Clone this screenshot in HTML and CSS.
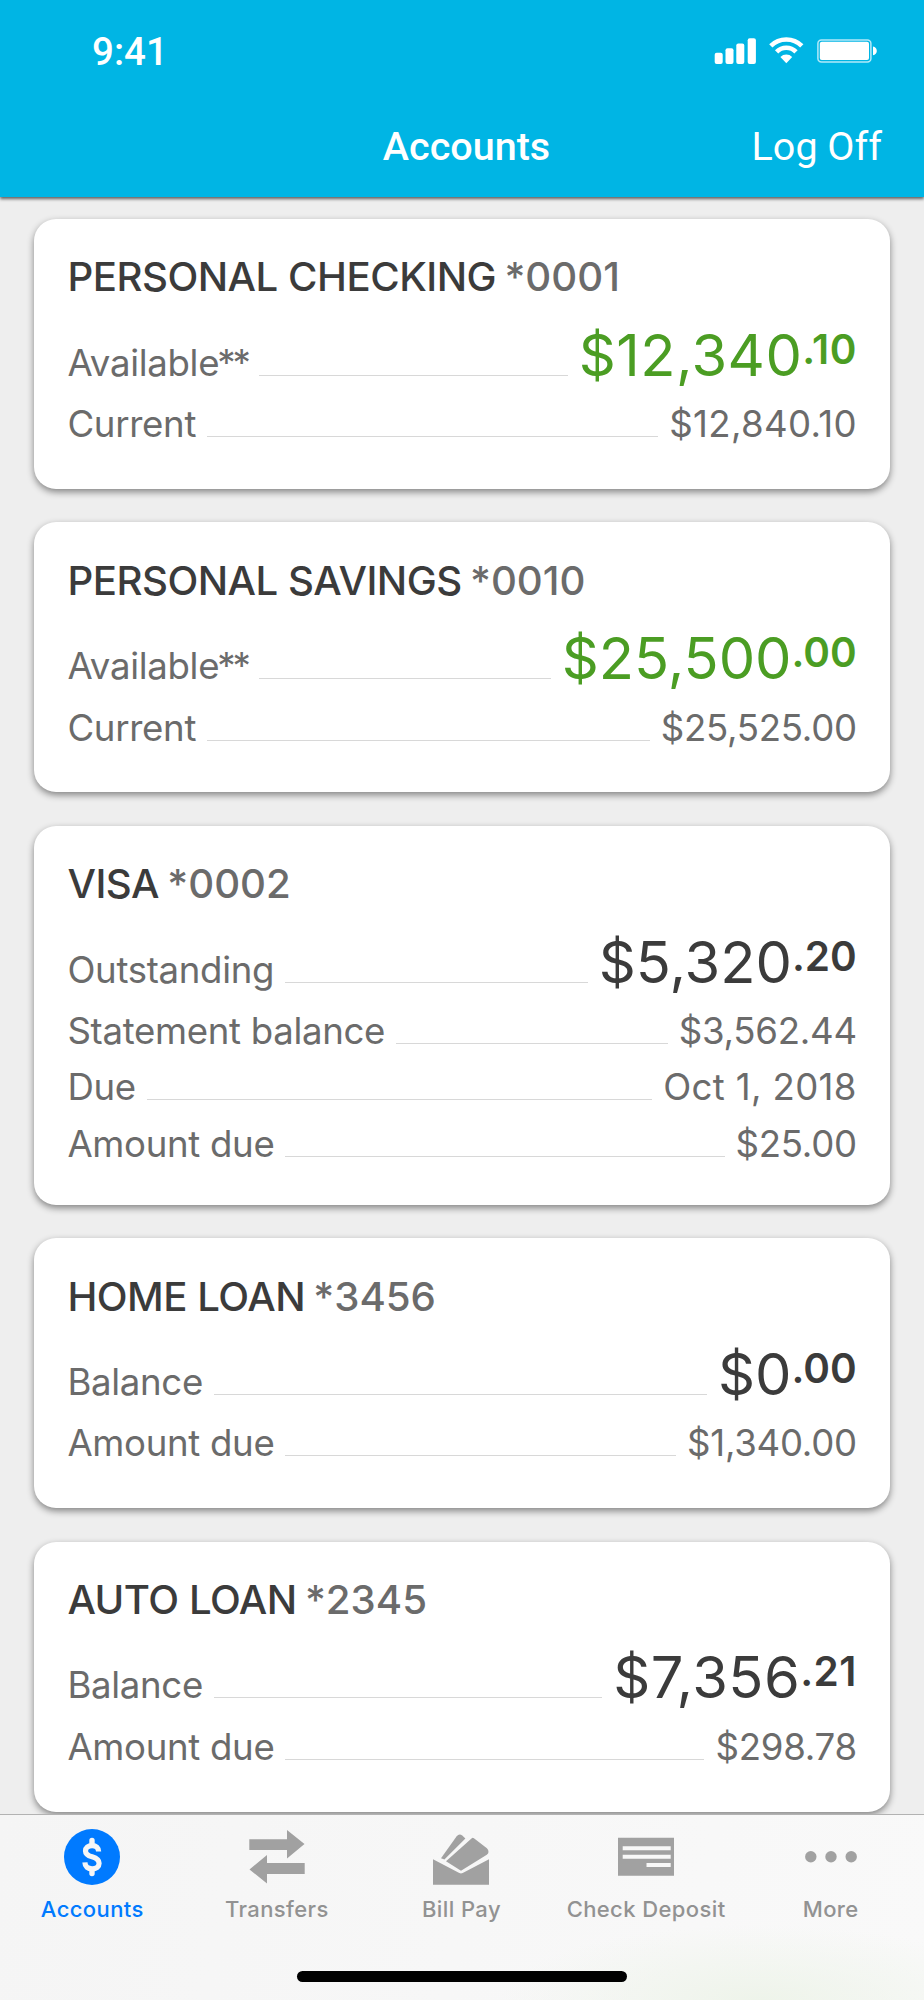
FILE: index.html
```html
<!DOCTYPE html>
<html lang="en">
<head>
    <meta charset="UTF-8">
    <title>Accounts</title>
    <link rel="stylesheet" href="styles.css">
</head>
<body>
<div class="screen">
    <header class="header">
        <div class="status">
            <span class="time">9:41</span>
            <svg class="status-icons" width="164" height="28" viewBox="0 0 164 28" fill="#fff">
                <rect x="0.7" y="15.7" width="8" height="11.3" rx="2"/>
                <rect x="11.5" y="11.3" width="8" height="15.7" rx="2"/>
                <rect x="22.3" y="6.5" width="8" height="20.5" rx="2"/>
                <rect x="33.7" y="1.3" width="8.2" height="25.7" rx="2"/>
                <g fill="none" stroke="#fff" stroke-width="4.6">
                    <path d="M56.8 8.9a22 22 0 0 1 31 0"/>
                    <path d="M62.6 14.8a13.6 13.6 0 0 1 19.4 0"/>
                </g>
                <path d="M72.3 26.2l-5.9-6.3a8.6 8.6 0 0 1 11.8 0z"/>
                <rect x="103.9" y="2.9" width="53" height="22" rx="3.5" fill="none" stroke="#b3e9f9" stroke-width="1.5"/>
                <rect x="105.8" y="4.8" width="49.2" height="18.2" rx="2"/>
                <path d="M159 9.6c2.3.4 3.8 2.1 3.8 4.3s-1.5 3.9-3.8 4.3z"/>
            </svg>
        </div>
        <div class="nav">
            <span class="nav-title">Accounts</span>
            <a class="logoff" href="#">Log Off</a>
        </div>
    </header>

    <main class="list">
        <section class="card">
            <h2 class="name"><span class="type">PERSONAL CHECKING</span> <span class="num">*0001</span></h2>
            <div class="row main">
                <span class="label">Available<span class="stars">**</span></span><i class="line"></i>
                <span class="amount green wide">$12,340<sup>.10</sup></span>
            </div>
            <div class="row"><span class="label">Current</span><i class="line"></i><span class="value wide">$12,840.10</span></div>
        </section>
        <section class="card">
            <h2 class="name"><span class="type">PERSONAL SAVINGS</span> <span class="num">*0010</span></h2>
            <div class="row main">
                <span class="label">Available<span class="stars">**</span></span><i class="line"></i>
                <span class="amount green">$25,500<sup>.00</sup></span>
            </div>
            <div class="row"><span class="label">Current</span><i class="line"></i><span class="value">$25,525.00</span></div>
        </section>
        <section class="card tall">
            <h2 class="name"><span class="type">VISA</span> <span class="num">*0002</span></h2>
            <div class="row main">
                <span class="label">Outstanding</span><i class="line"></i>
                <span class="amount">$5,320<sup>.20</sup></span>
            </div>
            <div class="row"><span class="label">Statement balance</span><i class="line"></i><span class="value">$3,562.44</span></div>
            <div class="row"><span class="label">Due</span><i class="line"></i><span class="value wide">Oct 1, 2018</span></div>
            <div class="row"><span class="label">Amount due</span><i class="line"></i><span class="value">$25.00</span></div>
        </section>
        <section class="card">
            <h2 class="name"><span class="type">HOME LOAN</span> <span class="num">*3456</span></h2>
            <div class="row main">
                <span class="label">Balance</span><i class="line"></i>
                <span class="amount">$0<sup>.00</sup></span>
            </div>
            <div class="row"><span class="label">Amount due</span><i class="line"></i><span class="value">$1,340.00</span></div>
        </section>
        <section class="card">
            <h2 class="name"><span class="type">AUTO LOAN</span> <span class="num">*2345</span></h2>
            <div class="row main">
                <span class="label">Balance</span><i class="line"></i>
                <span class="amount wide">$7,356<sup>.21</sup></span>
            </div>
            <div class="row"><span class="label">Amount due</span><i class="line"></i><span class="value">$298.78</span></div>
        </section>
    </main>

    <footer class="tabbar">
        <nav class="tabs">
            <a class="tab active" href="#">
                <svg class="icon" viewBox="0 0 56 56">
                    <circle cx="28" cy="28" r="28" fill="currentColor"/>
                    <path d="M28 11.5V15M28 41v3.5" fill="none" stroke="#f6f6f6" stroke-width="5.4" stroke-linecap="round"/>
                    <path d="M34.6 22.6c0-3.8-2.5-6-6.5-6s-6.6 2.1-6.6 5.3c0 3.3 2.4 4.6 6.6 5.9 4.4 1.4 7 2.9 7 6.5 0 3.5-2.8 5.5-7 5.5-4.3 0-7.1-2.2-7.2-6.4" fill="none" stroke="#f6f6f6" stroke-width="5.2"/>
                </svg>
                <span>Accounts</span>
            </a>
            <a class="tab" href="#">
                <svg class="icon" viewBox="0 0 56 56" fill="#a1a1a1">
                    <path d="M0.3 10.3H38V1l17.5 14L38 29.5V21H0.3z"/>
                    <path d="M55.7 45H18v9.5L0.5 40.5 18 26v8h37.7z"/>
                </svg>
                <span>Transfers</span>
            </a>
            <a class="tab" href="#">
                <svg class="icon" viewBox="0 0 56 56" fill="#a1a1a1">
                    <path d="M0 30.3l26.3 13.8q1.7.9 3.4 0L56 30.3v25.5H0z"/>
                    <path d="M13 32.2L38.8 9.2q1-.9 2.1 0l13 10q1.7 1.5 1.6 3.8 0 1.7-1.7 2.8L28 41.7z"/>
                    <path d="M8 29.3L23.5 7.6q2.6-3.3 5.7-1.1l3.2 3.1L11.4 30.5z"/>
                </svg>
                <span>Bill Pay</span>
            </a>
            <a class="tab" href="#">
                <svg class="icon" viewBox="0 0 56 56">
                    <path d="M0 8.7h56v38H0z" fill="#a1a1a1"/>
                    <path d="M4.7 17.3h48v4h-48zM4.7 25.7h48v4h-48zM28.5 34h24.2v4H28.5z" fill="#f8f8f8"/>
                </svg>
                <span>Check Deposit</span>
            </a>
            <a class="tab" href="#">
                <svg class="icon" viewBox="0 0 56 56" fill="#a1a1a1">
                    <circle cx="7.8" cy="27.7" r="5.7"/>
                    <circle cx="28" cy="27.7" r="5.7"/>
                    <circle cx="48.2" cy="27.7" r="5.7"/>
                </svg>
                <span>More</span>
            </a>
        </nav>
        <div class="home"></div>
    </footer>
</div>
</body>
</html>
```
FILE: styles.css
```css
*{
    box-sizing: border-box;
}
body{
    margin: 0;
    font-family: Inter, "Liberation Sans", sans-serif;
    background: #eee;
}
a{
    color: inherit;
    text-decoration: none;
}
.screen{
    display: flex;
    flex-direction: column;
    width: 924px;
    height: 2000px;
    overflow: hidden;
}

/* header */
.header{
    position: relative;
    height: 197px;
    padding-top: 37px;
    background: #00b5e4;
    color: #fff;
    font-family: Roboto, sans-serif;
    box-shadow: 0 2px 3px rgba(0,0,0,.6);
}
.status{
    display: flex;
    justify-content: space-between;
    height: 70px;
    padding: 0 46px 0 92px;
}
.time{
    font-size: 38.5px;
    font-weight: 500;
    line-height: 30px;
}
.nav{
    display: grid;
    grid-template-columns: 1fr auto 1fr;
    align-items: baseline;
    padding: 0 42px 0 51px;
    font-size: 39.5px;
    line-height: 80px;
}
.nav-title{
    grid-column: 2;
    font-weight: 500;
}
.logoff{
    justify-self: end;
}

/* account cards */
.list{
    flex: 1;
    min-height: 0;
    padding: 22px 34px 0;
    overflow: hidden;
}
.card{
    height: 270px;
    margin-bottom: 33.4px;
    padding: 32.4px 33.2px 0 33.4px;
    background: #fff;
    border-radius: 22px;
    box-shadow: 0 3px 7px rgba(0,0,0,.45);
}
.tall{
    height: 379px;
}
.name{
    margin: 0 0 16.4px;
    font-size: 40.2px;
    font-weight: 450;
    line-height: 51px;
    letter-spacing: -.5px;
    white-space: nowrap;
    color: #3b3b3b;
}
.num{
    margin-left: -2px;
    letter-spacing: 0;
    color: #6b6b6b;
}
.row{
    display: flex;
    align-items: baseline;
    font-size: 36.6px;
    line-height: 56.5px;
    color: #6b6b6b;
}
.label{
    letter-spacing: -.3px;
}
.stars{
    margin-left: -2px;
    letter-spacing: -3px;
}
.value{
    letter-spacing: -.25px;
}
.value.wide{
    letter-spacing: .35px;
}
.main{
    height: 73px;
    margin-bottom: 4.4px;
}
.line{
    flex: 1;
    margin: 0 11px;
    border-bottom: 1px solid #d8d8d8;
}
.amount{
    font-size: 57.8px;
    line-height: 73px;
    color: #3b3b3b;
}
.amount.wide{
    letter-spacing: .45px;
}
.amount sup{
    font-size: 40.5px;
    font-weight: 600;
    line-height: 0;
    vertical-align: 12.5px;
}
.amount.green{
    color: #4b9d23;
}

/* bottom tabs */
.tabbar{
    position: relative;
    height: 186px;
    border-top: 1px solid #b2b2b2;
    background: radial-gradient(ellipse 260px 75px at 760px 100%, #eef4ea, transparent), linear-gradient(100deg, #f5f5f5, #f9f9f9);
}
.tabs{
    display: grid;
    grid-template-columns: repeat(5, 1fr);
    height: 156px;
    padding: 14px 1px 0 0;
}
.tab{
    display: flex;
    flex-direction: column;
    align-items: center;
    color: #929292;
    font-size: 22px;
    font-weight: 450;
    line-height: 28px;
    letter-spacing: .4px;
    white-space: nowrap;
}
.icon{
    width: 56px;
    height: 56px;
    margin-bottom: 10px;
}
.active{
    color: #007aff;
}
.home{
    width: 330px;
    height: 11px;
    margin: 0 auto;
    border-radius: 6px;
    background: #000;
}
```
